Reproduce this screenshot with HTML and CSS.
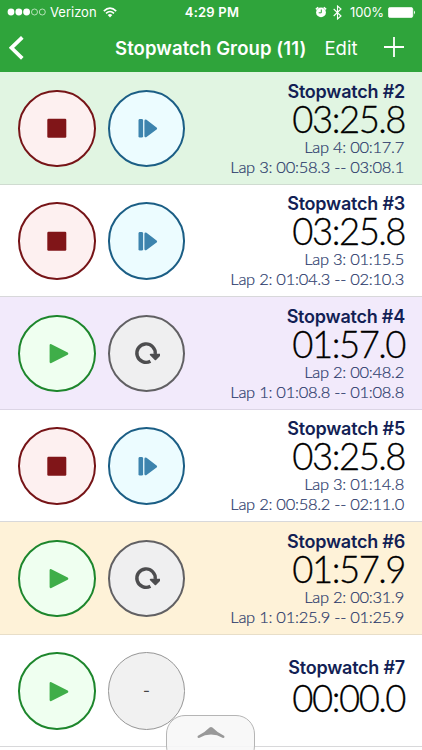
FILE: index.html
```
<!DOCTYPE html>
<html lang="en">
<head>
<meta charset="utf-8">
<title>Stopwatch Group</title>
<link rel="stylesheet" href="styles.css">
</head>
<body>
<svg class="defs" width="0" height="0" aria-hidden="true">
  <symbol id="stop" viewBox="0 0 28 28"><rect x="4.3" y="4.8" width="19" height="19" rx="1.2" fill="#801518"/></symbol>
  <symbol id="play" viewBox="0 0 28 28"><path d="M7.8 6.3L24.1 14.6L7.8 22.9Z" fill="#3fae49" stroke="#3fae49" stroke-width="2.4" stroke-linejoin="round"/></symbol>
  <symbol id="lap" viewBox="0 0 28 28"><rect x="6.5" y="5" width="4.6" height="18.6" rx="1.4" fill="#3d84ae"/><path d="M13.7 6.9L23.8 14.5L13.7 22Z" fill="#3d84ae" stroke="#3d84ae" stroke-width="2.6" stroke-linejoin="round"/></symbol>
  <symbol id="reset" viewBox="0 0 28 28"><path d="M18.4 22.2A9.2 9.2 0 1 1 23.2 15" fill="none" stroke="#4d4d4f" stroke-width="3.4"/><path d="M18.7 15.6H28L23.4 20.4Z" fill="#4d4d4f" stroke="#4d4d4f" stroke-width="1.8" stroke-linejoin="round"/></symbol>
</svg>
<div class="screen">
  <header>
    <div class="status">
      <div class="carrier">
        <svg width="39" height="8" viewBox="0 0 39 8"><g fill="#fff"><circle cx="4" cy="4" r="3.4"/><circle cx="11.8" cy="4" r="3.4"/><circle cx="19.6" cy="4" r="3.4"/></g><g fill="none" stroke="#d5f0d6" stroke-width=".8"><circle cx="27.5" cy="4" r="3"/><circle cx="35.3" cy="4" r="3"/></g></svg>
        <span class="network">Verizon</span>
        <svg width="14" height="11" viewBox="0 0 14 11"><g fill="none" stroke="#fff" stroke-width="1.6"><path d="M.8 4.1Q7-1.9 13.2 4.1M3 6.4Q7 2.6 11 6.4"/></g><path d="M4.7 8Q7 6.2 9.3 8L7 10.5Z" fill="#fff"/></svg>
      </div>
      <span class="clock">4:29 PM</span>
      <div class="power">
        <svg width="12" height="12" viewBox="0 0 12 12"><circle cx="6" cy="6.4" r="4.9" fill="#fff"/><path d="M.9 3.4L3.2 1.2M11.1 3.4L8.8 1.2" stroke="#fff" stroke-width="1.5"/><path d="M6.3 3.5V6.8H3.7" fill="none" stroke="#2fa43b"/></svg>
        <svg class="bluetooth" width="9" height="15" viewBox="0 0 9 15"><path d="M.7 4L8 11L4.5 14V1L8 4L.7 11" fill="none" stroke="#fff" stroke-width="1.1"/></svg>
        <span class="percent">100%</span>
        <svg width="28" height="11" viewBox="0 0 28 11"><rect x=".4" y=".4" width="24.4" height="10.2" rx="1.8" fill="#fff" stroke="#fff" stroke-width=".7"/><path d="M26 3.6Q28 5.5 26 7.4Z" fill="#fff"/></svg>
      </div>
    </div>
    <nav>
      <svg class="back" width="16" height="24" viewBox="0 0 16 24"><path d="M13.3 1.3L2.4 11.8L13.3 22.3" fill="none" stroke="#fff" stroke-width="3.7"/></svg>
      <h1>Stopwatch Group (11)</h1>
      <span class="edit">Edit</span>
      <svg class="add" width="20" height="20" viewBox="0 0 20 20"><path d="M10 0V20M0 10H20" stroke="#fff" stroke-width="1.8"/></svg>
    </nav>
  </header>
  <main>
    <section class="row mint">
      <div class="button red"><svg><use href="#stop"/></svg></div>
      <div class="button blue"><svg><use href="#lap"/></svg></div>
      <div class="info"><h2>Stopwatch #2</h2><div class="time">03:25.8</div><div class="split">Lap 4: 00:17.7</div><div class="split">Lap 3: 00:58.3 -- 03:08.1</div></div>
    </section>
    <section class="row">
      <div class="button red"><svg><use href="#stop"/></svg></div>
      <div class="button blue"><svg><use href="#lap"/></svg></div>
      <div class="info"><h2>Stopwatch #3</h2><div class="time">03:25.8</div><div class="split">Lap 3: 01:15.5</div><div class="split">Lap 2: 01:04.3 -- 02:10.3</div></div>
    </section>
    <section class="row lilac">
      <div class="button green"><svg><use href="#play"/></svg></div>
      <div class="button gray"><svg><use href="#reset"/></svg></div>
      <div class="info"><h2>Stopwatch #4</h2><div class="time">01:57.0</div><div class="split">Lap 2: 00:48.2</div><div class="split">Lap 1: 01:08.8 -- 01:08.8</div></div>
    </section>
    <section class="row">
      <div class="button red"><svg><use href="#stop"/></svg></div>
      <div class="button blue"><svg><use href="#lap"/></svg></div>
      <div class="info"><h2>Stopwatch #5</h2><div class="time">03:25.8</div><div class="split">Lap 3: 01:14.8</div><div class="split">Lap 2: 00:58.2 -- 02:11.0</div></div>
    </section>
    <section class="row cream">
      <div class="button green"><svg><use href="#play"/></svg></div>
      <div class="button gray"><svg><use href="#reset"/></svg></div>
      <div class="info"><h2>Stopwatch #6</h2><div class="time">01:57.9</div><div class="split">Lap 2: 00:31.9</div><div class="split">Lap 1: 01:25.9 -- 01:25.9</div></div>
    </section>
    <section class="row">
      <div class="button green"><svg><use href="#play"/></svg></div>
      <div class="button idle">-</div>
      <div class="info short"><h2>Stopwatch #7</h2><div class="time">00:00.0</div></div>
    </section>
  </main>
  <div class="drawer"><svg width="28" height="13" viewBox="0 0 28 13"><path d="M.6 10Q8 6.5 12.6 1.6Q14 .2 15.4 1.6Q20 6.5 27.4 10Q27.8 12.4 26 12Q20 8.6 14 8.6Q8 8.6 2 12Q.2 12.4 .6 10Z" fill="#999"/></svg></div>
</div>
</body>
</html>
```
FILE: styles.css
```
* { box-sizing: border-box; }
body { margin: 0; font-family: Inter, "Liberation Sans", sans-serif; background: #fff; }
svg { display: block; flex: none; }
.defs { position: absolute; }
.screen { position: relative; width: 422px; height: 750px; overflow: hidden; }

header { height: 72px; background: #2fa43b; color: #fff; }
.status { display: grid; grid-template-columns: 1fr auto 1fr; height: 24px; padding: 0 7px; align-items: center; font-size: 13px; line-height: 24px; }
.carrier, .power { display: flex; align-items: center; }
.network { margin: 0 6px 0 4px; letter-spacing: 0; }
.clock { font-weight: 600; letter-spacing: .2px; margin-left: 2px; }
.power { justify-content: flex-end; margin-right: -1px; }
.bluetooth { margin: 0 8px 0 6px; }
.percent { margin-right: 4px; letter-spacing: -.1px; }

nav { display: flex; align-items: center; height: 48px; padding-left: 9px; }
h1 { margin: 0 0 0 90px; width: 192px; font-size: 18.5px; line-height: 24px; font-weight: 600; letter-spacing: .1px; white-space: nowrap; }
.edit { margin-left: 17.5px; width: 33.5px; font-size: 18.5px; line-height: 24px; white-space: nowrap; }
.add { margin: -3px 0 0 26px; }

.row { display: flex; height: 112.5px; padding: 0 18px; border-bottom: 1.5px solid #d8d8da; background: #fff; }
.mint { background: #e1f5e2; border-color: #cfdbd0; }
.lilac { background: #f2eafb; border-color: #dcd5e5; }
.cream { background: #fef2d8; border-color: #e8dec8; }

.button { display: flex; align-items: center; justify-content: center; width: 77.5px; height: 77.5px; margin: 17.7px 12.2px 0 0; border: 2.4px solid; border-radius: 50%; flex: none; }
.button svg { width: 28px; height: 28px; }
.red { border-color: #761417; background: #fdf0f0; }
.blue { border-color: #1b5e85; background: #ecfcff; }
.green { border-color: #1d862c; background: #effff0; }
.gray { border-color: #616063; background: #efeff0; }
.idle { border: 1px solid #969696; background: #f1f1f1; color: #444; font-size: 15px; }

.info { flex: 1; margin-left: -12px; padding-top: 7.8px; text-align: right; white-space: nowrap; }
.short { padding-top: 21.8px; }
h2 { margin: 0 -1px 0 0; color: #131f55; font-size: 18px; line-height: 24px; font-weight: 600; letter-spacing: -.22px; }
.time { color: #000; font-family: Lato, sans-serif; font-weight: 300; font-size: 36.5px; line-height: 30px; letter-spacing: -1.5px; margin-right: -1px; margin-bottom: 3px; -webkit-text-stroke: .3px #000; }
.short .time { line-height: 36px; }
.split { color: #2b3a6b; font-family: Lato, sans-serif; font-weight: 300; font-size: 16.5px; line-height: 20px; letter-spacing: -.27px; -webkit-text-stroke: .2px #2b3a6b; }

.drawer { position: absolute; left: 166px; top: 715px; width: 89px; height: 50px; display: flex; justify-content: center; padding-top: 10px; border: 1px solid #b5b5b5; border-radius: 19px; background: rgba(247, 247, 247, .9); }
```
